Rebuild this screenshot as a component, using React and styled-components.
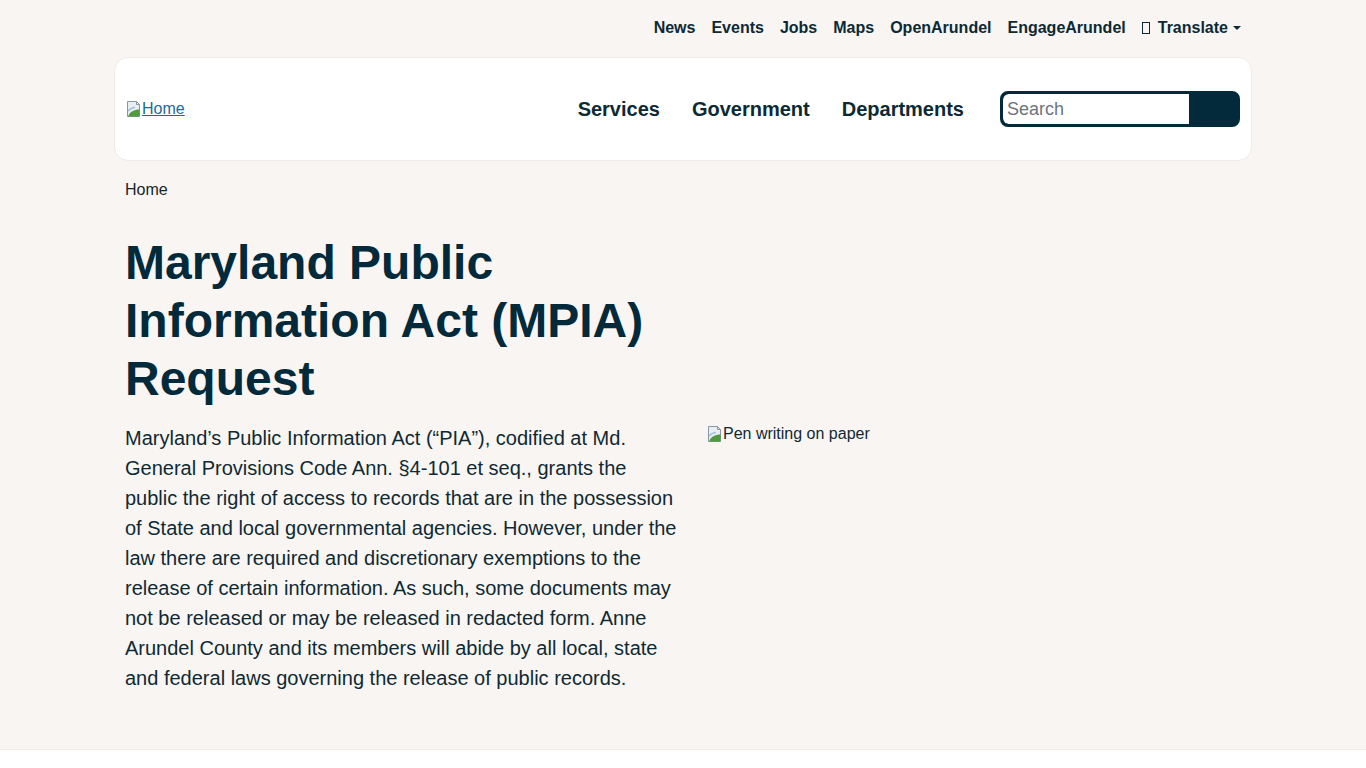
import styled, { createGlobalStyle } from "styled-components";

const Global = createGlobalStyle`
  html, body { margin: 0; padding: 0; background: #ffffff; }
  body { font-family: "Liberation Sans", Arial, sans-serif; color: #0d2a36; }
  * { box-sizing: border-box; }
`;

const Page = styled.div`
  background: #f9f5f2;
  padding-bottom: 56px;
  border-bottom: 1px solid #f3ece6;
`;

const Container = styled.div`
  width: 1140px;
  margin: 0 auto;
  padding: 0 12px;
`;

const TopBar = styled.nav`
  height: 55px;
  padding-left: 1px;
  display: flex;
  justify-content: flex-end;
  align-items: center;
  gap: 16px;
`;

const TopLink = styled.a`
  font-size: 16px;
  font-weight: 700;
  color: #0b2a36;
  text-decoration: none;
  display: flex;
  align-items: center;
`;

const Tofu = styled.span`
  display: inline-block;
  width: 8px;
  height: 12px;
  border: 1px solid #0b2a36;
  margin-right: 8px;
`;

const Caret = styled.span`
  display: inline-block;
  margin-left: 5px;
  border-top: 4.8px solid #0b2a36;
  border-left: 4px solid transparent;
  border-right: 4px solid transparent;
`;

const HeaderCard = styled.header`
  margin: 2px -11px 0;
  height: 104px;
  background: #ffffff;
  border: 1px solid #f0ebe6;
  border-radius: 14px;
  padding: 0 11px 0 11px;
  display: flex;
  align-items: center;
`;

const Logo = styled.a`
  display: flex;
  align-items: flex-end;
  font-size: 16px;
  color: #1c6a9c;
  text-decoration: underline;
`;

const MainNav = styled.nav`
  margin-left: auto;
  display: flex;
  align-items: center;
`;

const NavLink = styled.a`
  font-size: 20px;
  font-weight: 700;
  color: #0b2a36;
  text-decoration: none;
  padding: 0 16px;
`;

const SearchForm = styled.form`
  margin-left: 20px;
  width: 240px;
  height: 36px;
  display: flex;
  border: 3px solid #022a3a;
  border-radius: 8px;
  background: #022a3a;
  overflow: hidden;
`;

const SearchInput = styled.input`
  width: 186px;
  border: none;
  outline: none;
  background: #ffffff;
  border-radius: 6px 0 0 6px;
  font-family: "Liberation Sans", Arial, sans-serif;
  font-size: 18px;
  padding: 0 4px;
  color: #0b2a36;
  &::placeholder { color: #6c757d; }
`;

const SearchButton = styled.button`
  flex: 1;
  border: none;
  background: #022a3a;
`;

const Breadcrumb = styled.div`
  margin-top: 18px;
  font-size: 16px;
  line-height: 22px;
  color: #14262e;
`;

const Title = styled.h1`
  margin: 33px 0 0;
  width: 558px;
  font-size: 48px;
  line-height: 58px;
  font-weight: 700;
  color: #022a3a;
`;

const Row = styled.div`
  margin-top: 15px;
  display: grid;
  grid-template-columns: 558px 1fr;
  column-gap: 24px;
  align-items: start;
`;

const Body = styled.p`
  margin: 0;
  font-size: 20px;
  line-height: 30px;
  color: #0e2a35;
`;

const Figure = styled.div`
  margin-top: 2px;
  display: flex;
  align-items: flex-end;
  font-size: 16px;
  color: #0e2a35;
`;

function BrokenImage() {
  return (
    <svg width="16" height="18" viewBox="0 0 16 18" style={{ flexShrink: 0 }}>
      <path d="M1.5 1.5h9l3 3v12h-12z" fill="#e9eef3" stroke="#8a96a0" />
      <path d="M10.5 1.5v3h3" fill="none" stroke="#8a96a0" />
      <path d="M2 16.5c2-5 6-7 11.5-7v7z" fill="#4f9a3c" />
      <path d="M2 11c2-2 4-3.5 7-3.5" fill="none" stroke="#9fc2dc" strokeWidth="1.5" />
    </svg>
  );
}

export default function App() {
  const topLinks = ["News", "Events", "Jobs", "Maps", "OpenArundel", "EngageArundel"];
  const mainLinks = ["Services", "Government", "Departments"];
  return (
    <>
      <Global />
      <Page>
        <Container>
          <TopBar>
            {topLinks.map((t) => (
              <TopLink key={t} href="#">{t}</TopLink>
            ))}
            <TopLink href="#">
              <Tofu />
              Translate
              <Caret />
            </TopLink>
          </TopBar>
          <HeaderCard>
            <Logo href="#">
              <BrokenImage />
              Home
            </Logo>
            <MainNav>
              {mainLinks.map((t) => (
                <NavLink key={t} href="#">{t}</NavLink>
              ))}
            </MainNav>
            <SearchForm onSubmit={(e) => e.preventDefault()}>
              <SearchInput placeholder="Search" />
              <SearchButton type="submit" aria-label="Search" />
            </SearchForm>
          </HeaderCard>
          <Breadcrumb>Home</Breadcrumb>
          <Title>Maryland Public Information Act (MPIA) Request</Title>
          <Row>
            <Body>
              Maryland’s Public Information Act (“PIA”), codified at Md. General Provisions Code Ann. §4-101 et seq., grants the public the right of access to records that are in the possession of State and local governmental agencies. However, under the law there are required and discretionary exemptions to the release of certain information. As such, some documents may not be released or may be released in redacted form. Anne Arundel County and its members will abide by all local, state and federal laws governing the release of public records.
            </Body>
            <Figure>
              <BrokenImage />
              Pen writing on paper
            </Figure>
          </Row>
        </Container>
      </Page>
    </>
  );
}
